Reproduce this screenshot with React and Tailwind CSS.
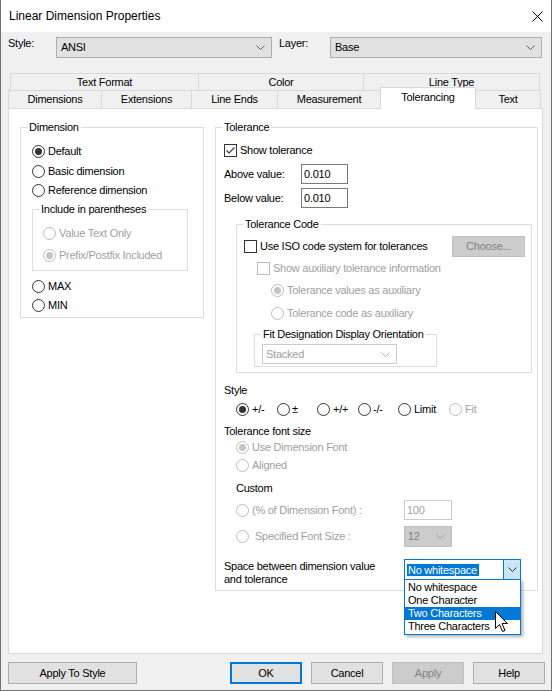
import React from "react";

function Radio({ checked = false, disabled = false }) {
  return (
    <span
      className={`flex h-[13px] w-[13px] shrink-0 items-center justify-center rounded-full border bg-white ${
        disabled ? "border-[#bcbcbc]" : "border-[#333333]"
      }`}
    >
      {checked && (
        <span
          className={`h-[7px] w-[7px] rounded-full ${disabled ? "bg-[#c4c4c4]" : "bg-[#333333]"}`}
        />
      )}
    </span>
  );
}

function Check({ checked = false, disabled = false }) {
  return (
    <span
      className={`flex h-[13px] w-[13px] shrink-0 items-center justify-center border bg-white ${
        disabled ? "border-[#bcbcbc]" : "border-[#333333]"
      }`}
    >
      {checked && (
        <svg width="11" height="11" viewBox="0 0 11 11">
          <path d="M1.5 5.5 L4 8 L9.5 2.5" fill="none" stroke="#333333" strokeWidth="1.1" />
        </svg>
      )}
    </span>
  );
}

function Chevron({ color = "#606060" }) {
  return (
    <svg width="9" height="5" viewBox="0 0 9 5" className="shrink-0">
      <path d="M0.5 0.5 L4.5 4.5 L8.5 0.5" fill="none" stroke={color} strokeWidth="1" />
    </svg>
  );
}

function Group({ label, className = "", children }) {
  return (
    <fieldset className={`border border-[#dcdcdc] ${className}`}>
      <legend className="ml-[6px] px-[2px] leading-[13px]">{label}</legend>
      {children}
    </fieldset>
  );
}

function Option({ checked, disabled, label, className = "", gap = "gap-[3px]" }) {
  return (
    <div className={`flex items-center ${gap} ${className}`}>
      <Radio checked={checked} disabled={disabled} />
      <span className={`leading-[13px] ${disabled ? "text-[#a0a0a0]" : ""}`}>{label}</span>
    </div>
  );
}

function Cursor() {
  return (
    <svg width="14" height="22" viewBox="0 0 14 22" className="absolute left-[90px] top-[31px]">
      <path
        d="M0.5 0.5 L0.5 17.5 L4.5 13.5 L7.5 20.5 L10 19.5 L7 12.5 L12.5 12.5 Z"
        fill="#ffffff"
        stroke="#000000"
        strokeWidth="1"
        strokeLinejoin="miter"
      />
    </svg>
  );
}

function Tab({ label, w, last }) {
  return (
    <div
      className={`flex h-full items-center justify-center border-l border-t border-[#d9d9d9] ${
        last ? "border-r" : ""
      } ${w}`}
    >
      {label}
    </div>
  );
}

function Button({ children, variant, w = "w-[72px]" }) {
  const look =
    variant === "default"
      ? "border-2 border-[#0078d7] bg-[#e1e1e1]"
      : variant === "disabled"
      ? "border border-[#bfbfbf] bg-[#cccccc] text-[#838383]"
      : "border border-[#adadad] bg-[#e1e1e1]";
  return <div className={`flex h-[22px] items-center justify-center ${w} ${look}`}>{children}</div>;
}

export default function App() {
  const dropItems = ["No whitespace", "One Character", "Two Characters", "Three Characters"];

  return (
    <div className="flex h-[691px] w-[552px] flex-col border-x border-b border-[#707070] bg-[#f0f0f0] font-['Liberation_Sans',Arial,sans-serif] text-[11px] tracking-[-0.25px] text-black">
      {/* title bar */}
      <div className="flex h-[32px] shrink-0 items-center justify-between bg-white px-[8px] text-[12px] tracking-normal">
        <span>Linear Dimension Properties</span>
        <svg width="11" height="11" viewBox="0 0 11 11">
          <path d="M0.5 0.5 L10.5 10.5 M10.5 0.5 L0.5 10.5" stroke="#000" strokeWidth="1" />
        </svg>
      </div>

      {/* style / layer */}
      <div className="mt-[5px] flex h-[21px] items-start pl-[7px]">
        <span className="w-[48px] leading-[13px]">Style:</span>
        <div className="flex h-[21px] w-[216px] items-center justify-between border border-[#adadad] bg-[#e1e1e1] pl-[4px] pr-[6px]">
          <span>ANSI</span>
          <Chevron />
        </div>
        <span className="ml-[7px] w-[51px] leading-[13px]">Layer:</span>
        <div className="flex h-[21px] w-[212px] items-center justify-between border border-[#adadad] bg-[#e1e1e1] pl-[4px] pr-[6px]">
          <span>Base</span>
          <Chevron />
        </div>
      </div>

      {/* tabs */}
      <div className="mt-[15px] flex h-[17px] pl-[9px]">
        <Tab label="Text Format" w="w-[188px]" />
        <Tab label="Color" w="w-[165px]" />
        <Tab label="Line Type" w="w-[177px]" last />
      </div>
      <div className="flex h-[18px] items-end pl-[7px]">
        <Tab label="Dimensions" w="w-[93px]" />
        <Tab label="Extensions" w="w-[90px]" />
        <Tab label="Line Ends" w="w-[86px]" />
        <Tab label="Measurement" w="w-[103px]" />
        <div className="relative z-10 -mb-px flex h-[22px] w-[96px] items-center justify-center border-x border-t border-[#d9d9d9] bg-white pb-[2px]">
          Tolerancing
        </div>
        <div className="flex h-full w-[65px] items-center justify-center border-r border-t border-[#d9d9d9]">
          Text
        </div>
      </div>

      {/* panel */}
      <div className="ml-[7px] flex h-[546px] w-[535px] items-start border border-[#d9d9d9] bg-white pl-[11px] pt-[12px]">
        {/* Dimension */}
        <Group label="Dimension" className="w-[184px] pb-[3px]">
          <div className="mt-[7px] pl-[11px]">
            <Option checked label="Default" className="h-[20px]" />
            <Option label="Basic dimension" className="h-[20px]" />
            <Option label="Reference dimension" className="h-[18px]" />
          </div>
          <Group label="Include in parentheses" className="ml-[11px] mt-[4px] w-[156px] pb-[5px]">
            <div className="mt-[7px] pl-[10px]">
              <Option disabled label="Value Text Only" className="h-[20px]" />
              <Option disabled checked label="Prefix/Postfix Included" className="mt-[2px] h-[20px]" />
            </div>
          </Group>
          <div className="mt-[5px] pl-[11px]">
            <Option label="MAX" className="h-[20px]" />
            <Option label="MIN" className="h-[18px]" />
          </div>
        </Group>

        {/* Tolerance */}
        <Group label="Tolerance" className="ml-[11px] w-[323px] pb-[4px]">
          <div className="pl-[8px]">
            <div className="mt-[7px] flex h-[18px] items-center gap-[3px]">
              <Check checked />
              <span>Show tolerance</span>
            </div>
            <div className="mt-[5px] flex h-[20px] items-center">
              <span className="w-[77px]">Above value:</span>
              <div className="flex h-[20px] w-[47px] items-center border border-[#7a7a7a] bg-white pl-[2px]">0.010</div>
            </div>
            <div className="mt-[4px] flex h-[20px] items-center">
              <span className="w-[77px]">Below value:</span>
              <div className="flex h-[20px] w-[47px] items-center border border-[#7a7a7a] bg-white pl-[2px]">0.010</div>
            </div>

            <Group label="Tolerance Code" className="ml-[12px] mt-[10px] w-[296px] pb-[5px]">
              <div className="mt-[4px] flex h-[22px] items-center justify-between pl-[7px] pr-[6px]">
                <div className="flex items-center gap-[3px]">
                  <Check />
                  <span>Use ISO code system for tolerances</span>
                </div>
                <div className="flex h-[21px] w-[73px] items-center justify-center border border-[#bfbfbf] bg-[#cccccc] text-[#838383]">
                  Choose...
                </div>
              </div>
              <div className="mt-[2px] flex h-[18px] items-center gap-[3px] pl-[20px]">
                <Check disabled />
                <span className="text-[#a0a0a0]">Show auxiliary tolerance information</span>
              </div>
              <div className="pl-[34px]">
                <Option disabled checked label="Tolerance values as auxiliary" className="mt-[4px] h-[18px]" />
                <Option disabled label="Tolerance code as auxiliary" className="mt-[5px] h-[18px]" />
              </div>
              <Group label="Fit Designation Display Orientation" className="ml-[17px] mt-[6px] w-[183px] pb-[2px]">
                <div className="ml-[7px] mt-[3px] flex h-[20px] w-[135px] items-center justify-between border border-[#cccccc] bg-white pl-[3px] pr-[6px] text-[#a0a0a0]">
                  <span>Stacked</span>
                  <Chevron color="#b4b4b4" />
                </div>
              </Group>
            </Group>

            <div className="mt-[10px] flex h-[14px] items-center">Style</div>
            <div className="mt-[3px] flex h-[18px] items-center pl-[12px]">
              <Option checked label="+/-" className="w-[41px]" />
              <Option label="±" className="w-[40px]" gap="gap-[2px]" />
              <Option label="+/+" className="w-[41px]" />
              <Option label="-/-" className="w-[40px]" gap="gap-[2px]" />
              <Option label="Limit" className="w-[51px]" />
              <Option disabled label="Fit" />
            </div>

            <div className="mt-[6px] flex h-[14px] items-center">Tolerance font size</div>
            <div className="pl-[12px]">
              <Option disabled checked label="Use Dimension Font" className="h-[18px]" />
              <Option disabled label="Aligned" className="h-[18px]" />
            </div>
            <div className="mt-[7px] flex h-[14px] items-center pl-[12px]">Custom</div>
            <div className="mt-[5px] flex h-[20px] items-center pl-[12px]">
              <Option disabled label="(% of Dimension Font) :" className="w-[168px]" />
              <div className="flex h-[20px] w-[48px] items-center border border-[#cccccc] bg-white pl-[2px] text-[#a0a0a0]">
                100
              </div>
            </div>
            <div className="mt-[6px] flex h-[21px] items-center pl-[12px]">
              <Option disabled label="Specified Font Size :" className="w-[168px]" gap="gap-[6px]" />
              <div className="flex h-[21px] w-[48px] items-center justify-between border border-[#bfbfbf] bg-[#cccccc] pl-[3px] pr-[6px] text-[#838383]">
                <span>12</span>
                <Chevron color="#a0a0a0" />
              </div>
            </div>

            <div className="mt-[12px] flex items-start">
              <div className="w-[180px] pt-px leading-[13px]">
                Space between dimension value
                <br />
                and tolerance
              </div>
              <div className="relative z-20 flex h-[21px] w-[117px] border border-[#0078d7] bg-white">
                <div className="flex flex-1 items-center pl-[2px]">
                  <span className="bg-[#0078d7] pl-px pr-[2px] leading-[12px] text-white">No whitespace</span>
                </div>
                <div className="flex w-[17px] items-center justify-center border-l border-[#0078d7] bg-[#cce4f7]">
                  <Chevron color="#333333" />
                </div>
                <div className="absolute left-[-1px] top-full w-[117px] border border-[#0078d7] bg-white py-px shadow-[2px_2px_3px_rgba(0,0,0,0.3)]">
                  {dropItems.map((item, i) => (
                    <div
                      key={item}
                      className={`h-[13px] pl-[3px] leading-[13px] ${i === 2 ? "bg-[#0078d7] text-white" : ""}`}
                    >
                      {item}
                    </div>
                  ))}
                  <Cursor />
                </div>
              </div>
            </div>
          </div>
        </Group>
      </div>

      {/* buttons */}
      <div className="mt-[8px] flex items-center justify-between pl-[7px] pr-[6px]">
        <Button w="w-[129px]">Apply To Style</Button>
        <div className="flex gap-[9px]">
          <Button variant="default">OK</Button>
          <Button>Cancel</Button>
          <Button variant="disabled">Apply</Button>
          <Button>Help</Button>
        </div>
      </div>
    </div>
  );
}
